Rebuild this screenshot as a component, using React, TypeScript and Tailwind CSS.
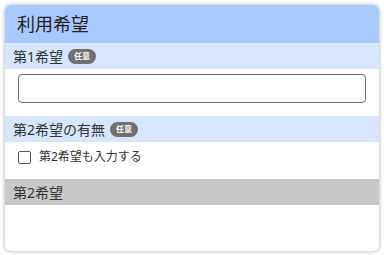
import React from "react";

const font = { fontFamily: '"Noto Sans", "Noto Sans CJK JP", sans-serif' };

function Badge() {
  return (
    <span className="ml-[5px] inline-flex h-[15px] w-[28px] items-center justify-center rounded-full bg-[#707070] text-[8px] font-bold leading-none text-white">
      任意
    </span>
  );
}

export default function App() {
  return (
    <div className="h-[255px] w-[384px] bg-white p-[5px]" style={font}>
      <div className="flex h-[246px] flex-col overflow-hidden rounded-[6px] bg-white shadow-[0_0_4px_rgba(0,0,0,0.35)]">
        <div className="flex h-[38px] shrink-0 items-center bg-[#a8c9fd] pl-[12px] text-[18px] text-[#222]">
          利用希望
        </div>
        <div className="flex h-[26px] shrink-0 items-center bg-[#d7e5fd] pl-[8px] text-[14px] text-[#333]">
          第1希望
          <Badge />
        </div>
        <div className="px-[13px] pt-[5px] pb-[13px]">
          <div className="h-[29px] rounded-[4px] border border-[#6b6b6b] bg-white" />
        </div>
        <div className="flex h-[26px] shrink-0 items-center bg-[#d7e5fd] pl-[8px] text-[14px] text-[#333]">
          第2希望の有無
          <Badge />
        </div>
        <div className="flex h-[37px] shrink-0 items-center pl-[13px] pb-[7px]">
          <span className="h-[13px] w-[13px] rounded-[2px] border border-[#555] bg-white" />
          <span className="ml-[8px] text-[12px] text-[#333]">第2希望も入力する</span>
        </div>
        <div className="flex h-[26px] shrink-0 items-center bg-[#c8c8c8] pl-[8px] text-[14px] text-[#333]">
          第2希望
        </div>
        <div className="flex-1" />
      </div>
    </div>
  );
}
